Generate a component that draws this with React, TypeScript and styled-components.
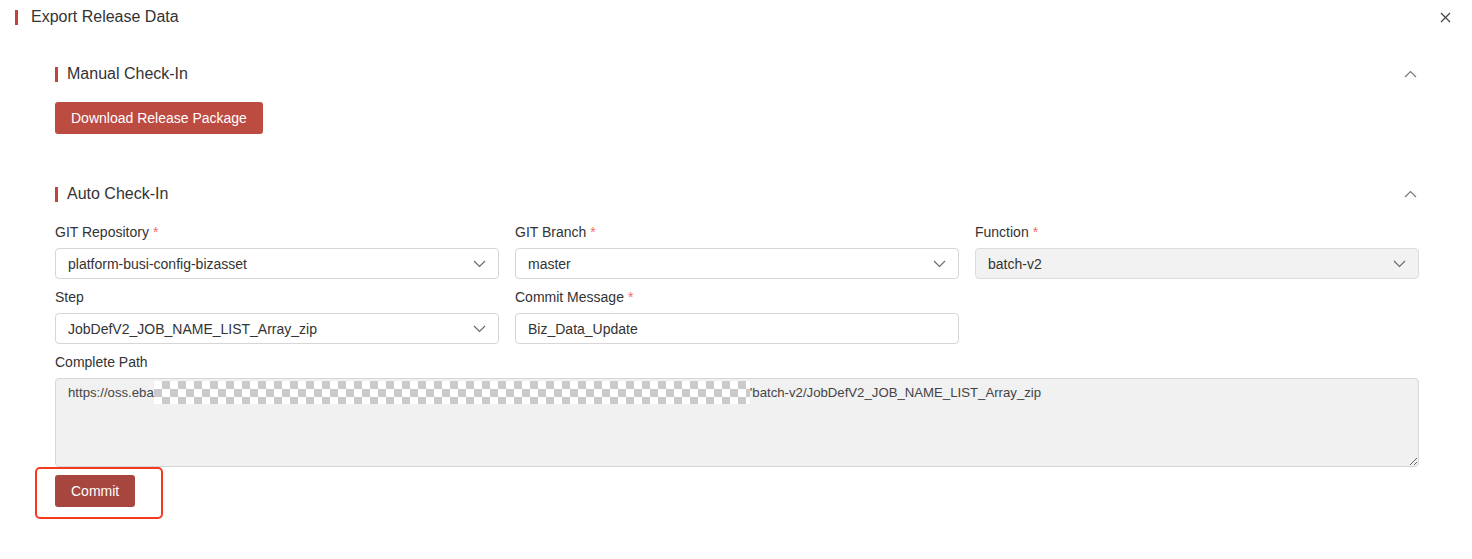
import React from "react";
import styled, { createGlobalStyle } from "styled-components";

const GlobalStyle = createGlobalStyle`
  html, body {
    margin: 0;
    padding: 0;
    background: #ffffff;
    font-family: "Liberation Sans", Arial, sans-serif;
    color: #333333;
  }
`;

const Dialog = styled.div`
  width: 1472px;
  min-height: 559px;
  background: #fff;
  box-sizing: border-box;
`;

const DialogHeader = styled.div`
  display: flex;
  align-items: center;
  justify-content: space-between;
  height: 34px;
  padding: 0 20px 0 15px;
`;

const TitleWrap = styled.div`
  display: flex;
  align-items: center;
  gap: 13px;
`;

const Mark = styled.span`
  display: inline-block;
  width: 3px;
  height: 15px;
  background: #c0463d;
`;

const Title = styled.span`
  font-size: 16px;
  color: #333;
`;

const CloseButton = styled.button`
  border: none;
  background: none;
  padding: 0;
  width: 14px;
  height: 14px;
  display: flex;
  align-items: center;
  justify-content: center;
  cursor: pointer;
  color: #555;
`;

const Body = styled.div`
  padding: 28px 53px 0 55px;
`;

const Section = styled.section<{ $gap?: number }>`
  margin-bottom: ${(p) => p.$gap ?? 0}px;
`;

const SectionHeader = styled.div`
  display: flex;
  align-items: center;
  justify-content: space-between;
  height: 24px;
  padding-right: 2px;
`;

const SectionTitle = styled.div`
  display: flex;
  align-items: center;
  gap: 9px;
  font-size: 16px;
  color: #333;
`;

const Chevron = styled.span`
  display: flex;
  color: #777;
`;

const PrimaryButton = styled.button<{ $dark?: boolean }>`
  height: 32px;
  border: none;
  border-radius: 3px;
  padding: 0 16px;
  background: ${(p) => (p.$dark ? "#a6463e" : "#bc4b42")};
  color: #fff;
  font-family: "Liberation Sans", Arial, sans-serif;
  font-size: 14px;
  cursor: pointer;
`;

const ManualBody = styled.div`
  padding-top: 16px;
`;

const FormGrid = styled.div`
  display: grid;
  grid-template-columns: repeat(3, 444px);
  column-gap: 16px;
  row-gap: 8px;
  margin-top: 16px;
`;

const Field = styled.div<{ $span?: number }>`
  display: flex;
  flex-direction: column;
  gap: 6px;
  grid-column: span ${(p) => p.$span ?? 1};
`;

const Label = styled.label`
  font-size: 14px;
  line-height: 20px;
  height: 20px;
  color: #333;
`;

const Required = styled.span`
  color: #f56c6c;
  margin-left: 4px;
`;

const SelectBox = styled.div<{ $disabled?: boolean }>`
  height: 31px;
  box-sizing: border-box;
  border: 1px solid ${(p) => (p.$disabled ? "#dcdcdc" : "#d6d6d6")};
  border-radius: 4px;
  background: ${(p) => (p.$disabled ? "#f2f2f2" : "#fff")};
  display: flex;
  align-items: center;
  justify-content: space-between;
  padding: 0 12px 0 12px;
  font-size: 14px;
  color: #333;
`;

const TextInput = styled.input`
  height: 31px;
  box-sizing: border-box;
  border: 1px solid #d6d6d6;
  border-radius: 4px;
  padding: 0 12px;
  font-family: "Liberation Sans", Arial, sans-serif;
  font-size: 14px;
  color: #333;
  outline: none;
`;

const PathArea = styled.div`
  height: 89px;
  box-sizing: border-box;
  border: 1px solid #d6d6d6;
  border-radius: 4px;
  background: #f1f1f1;
  padding: 3px 12px;
  font-size: 13.2px;
  line-height: 22px;
  color: #444;
  resize: vertical;
  overflow: auto;
  white-space: nowrap;
`;

const Redacted = styled.span`
  display: inline-block;
  width: 596px;
  height: 23px;
  vertical-align: middle;
  margin-top: -2px;
  background-color: #ffffff;
  background-image: linear-gradient(45deg, #cacaca 25%, transparent 25%),
    linear-gradient(-45deg, #cacaca 25%, transparent 25%),
    linear-gradient(45deg, transparent 75%, #cacaca 75%),
    linear-gradient(-45deg, transparent 75%, #cacaca 75%);
  background-size: 16px 16px;
  background-position: 0 0, 0 8px, 8px -8px, -8px 0;
`;

const Footer = styled.div`
  padding-top: 8px;
`;

const Highlight = styled.div`
  position: relative;
  display: inline-block;

  &::after {
    content: "";
    position: absolute;
    left: -20px;
    top: -8px;
    width: 128px;
    height: 52px;
    box-sizing: border-box;
    border: 2.5px solid #f5391f;
    border-radius: 5px;
    pointer-events: none;
  }
`;

const ChevronDown = () => (
  <svg width="13" height="8" viewBox="0 0 13 8" fill="none">
    <path d="M1 1l5.5 5.5L12 1" stroke="#666" strokeWidth="1.1" />
  </svg>
);

const ChevronUp = () => (
  <svg width="13" height="8" viewBox="0 0 13 8" fill="none">
    <path d="M1 7l5.5-5.5L12 7" stroke="#777" strokeWidth="1.1" />
  </svg>
);

type SelectProps = { value: string; disabled?: boolean };

const Select = ({ value, disabled }: SelectProps) => (
  <SelectBox $disabled={disabled}>
    <span>{value}</span>
    <ChevronDown />
  </SelectBox>
);

const SectionHead = ({ title }: { title: string }) => (
  <SectionHeader>
    <SectionTitle>
      <Mark />
      {title}
    </SectionTitle>
    <Chevron>
      <ChevronUp />
    </Chevron>
  </SectionHeader>
);

const App = () => {
  return (
    <>
      <GlobalStyle />
      <Dialog>
        <DialogHeader>
          <TitleWrap>
            <Mark />
            <Title>Export Release Data</Title>
          </TitleWrap>
          <CloseButton aria-label="close">
            <svg width="11" height="11" viewBox="0 0 11 11">
              <path d="M1 1l9 9M10 1l-9 9" stroke="#444" strokeWidth="1.2" />
            </svg>
          </CloseButton>
        </DialogHeader>

        <Body>
          <Section $gap={48}>
            <SectionHead title="Manual Check-In" />
            <ManualBody>
              <PrimaryButton>Download Release Package</PrimaryButton>
            </ManualBody>
          </Section>

          <Section>
            <SectionHead title="Auto Check-In" />
            <FormGrid>
              <Field>
                <Label>
                  GIT Repository<Required>*</Required>
                </Label>
                <Select value="platform-busi-config-bizasset" />
              </Field>
              <Field>
                <Label>
                  GIT Branch<Required>*</Required>
                </Label>
                <Select value="master" />
              </Field>
              <Field>
                <Label>
                  Function<Required>*</Required>
                </Label>
                <Select value="batch-v2" disabled />
              </Field>
              <Field>
                <Label>Step</Label>
                <Select value="JobDefV2_JOB_NAME_LIST_Array_zip" />
              </Field>
              <Field>
                <Label>
                  Commit Message<Required>*</Required>
                </Label>
                <TextInput defaultValue="Biz_Data_Update" />
              </Field>
              <div />
              <Field $span={3}>
                <Label>Complete Path</Label>
                <PathArea>
                  https://oss.eba
                  <Redacted />
                  'batch-v2/JobDefV2_JOB_NAME_LIST_Array_zip
                </PathArea>
              </Field>
            </FormGrid>
            <Footer>
              <Highlight>
                <PrimaryButton $dark>Commit</PrimaryButton>
              </Highlight>
            </Footer>
          </Section>
        </Body>
      </Dialog>
    </>
  );
};

export default App;
